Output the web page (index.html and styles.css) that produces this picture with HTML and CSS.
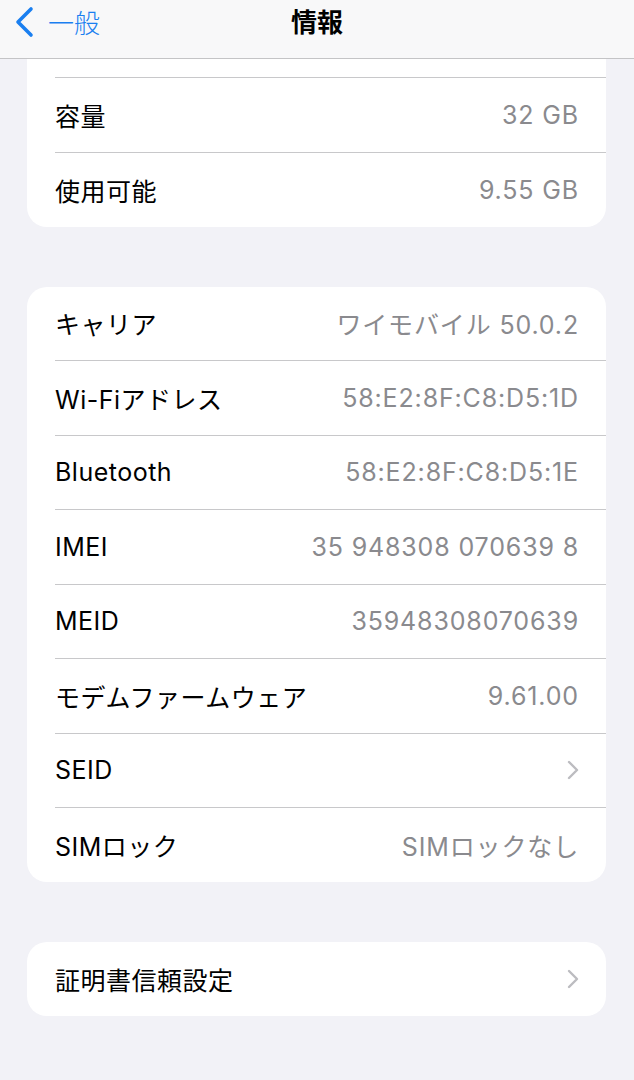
FILE: index.html
```html
<!DOCTYPE html>
<html lang="ja">
<head>
<meta charset="utf-8">
<link rel="stylesheet" href="styles.css">
</head>
<body>
<header class="nav">
  <div class="back">
    <svg class="back-chev" width="22" height="32" viewBox="0 0 22 32"><path d="M18 3 L5 16 L18 29" fill="none" stroke="#1a7ff0" stroke-width="3.6" stroke-linecap="round" stroke-linejoin="round"/></svg>
    <span class="back-label">一般</span>
  </div>
  <div class="title">情報</div>
</header>
<main class="content">
  <section class="group group-cut">
    <div class="row row-partial"></div>
    <div class="row"><span class="label">容量</span><span class="value">32 GB</span></div>
    <div class="row"><span class="label">使用可能</span><span class="value">9.55 GB</span></div>
  </section>
  <section class="group">
    <div class="row"><span class="label">キャリア</span><span class="value">ワイモバイル 50.0.2</span></div>
    <div class="row"><span class="label">Wi-Fiアドレス</span><span class="value">58:E2:8F:C8:D5:1D</span></div>
    <div class="row"><span class="label">Bluetooth</span><span class="value">58:E2:8F:C8:D5:1E</span></div>
    <div class="row"><span class="label">IMEI</span><span class="value">35 948308 070639 8</span></div>
    <div class="row"><span class="label">MEID</span><span class="value">35948308070639</span></div>
    <div class="row"><span class="label">モデムファームウェア</span><span class="value">9.61.00</span></div>
    <div class="row"><span class="label">SEID</span><svg class="chev" width="14" height="22" viewBox="0 0 14 22"><path d="M3 3 L11 11 L3 19" fill="none" stroke="#bcbcc0" stroke-width="2.4" stroke-linecap="round" stroke-linejoin="round"/></svg></div>
    <div class="row"><span class="label">SIMロック</span><span class="value">SIMロックなし</span></div>
  </section>
  <section class="group">
    <div class="row"><span class="label">証明書信頼設定</span><svg class="chev" width="14" height="22" viewBox="0 0 14 22"><path d="M3 3 L11 11 L3 19" fill="none" stroke="#bcbcc0" stroke-width="2.4" stroke-linecap="round" stroke-linejoin="round"/></svg></div>
  </section>
</main>
</body>
</html>
```
FILE: styles.css
```css
* { box-sizing: border-box; }
html, body { margin: 0; padding: 0; }
body {
  background: #f2f2f7;
  font-family: Inter, "Noto Sans CJK JP", sans-serif;
  color: #000;
  width: 634px;
  height: 1080px;
  overflow: hidden;
}
.nav {
  height: 59px;
  background: #f8f8f9;
  border-bottom: 1px solid #c4c4c6;
  display: flex;
  align-items: center;
  justify-content: center;
  position: relative;
}
.back {
  position: absolute;
  left: 13px;
  top: 6px;
  display: flex;
  align-items: center;
  gap: 13px;
}
.back-label {
  color: #1a7ff0;
  font-size: 26px;
  font-family: "Noto Sans CJK JP", sans-serif;
  font-weight: 300;
  line-height: 32px;
}
.title {
  font-size: 26px;
  font-weight: 700;
  font-family: "Noto Sans CJK JP", sans-serif;
  line-height: 32px;
  margin-top: -17px;
}
.content {
  padding: 0 28px 0 27px;
  display: flex;
  flex-direction: column;
  gap: 60px;
}
.group {
  background: #fff;
  border-radius: 20px;
  overflow: hidden;
}
.group-cut {
  border-top-left-radius: 0;
  border-top-right-radius: 0;
}
.row {
  height: 74.5px;
  margin-left: 28px;
  padding-right: 27px;
  display: flex;
  align-items: center;
  justify-content: space-between;
  border-bottom: 1px solid #c8c8ca;
  font-size: 25px;
}
.row:last-child { border-bottom: none; height: 74px; }
.row-partial { height: 19px; }
.label { letter-spacing: 0.5px; }
.value { color: #8a8a8e; letter-spacing: 0.85px; }
.chev { margin-right: -1px; }
```
